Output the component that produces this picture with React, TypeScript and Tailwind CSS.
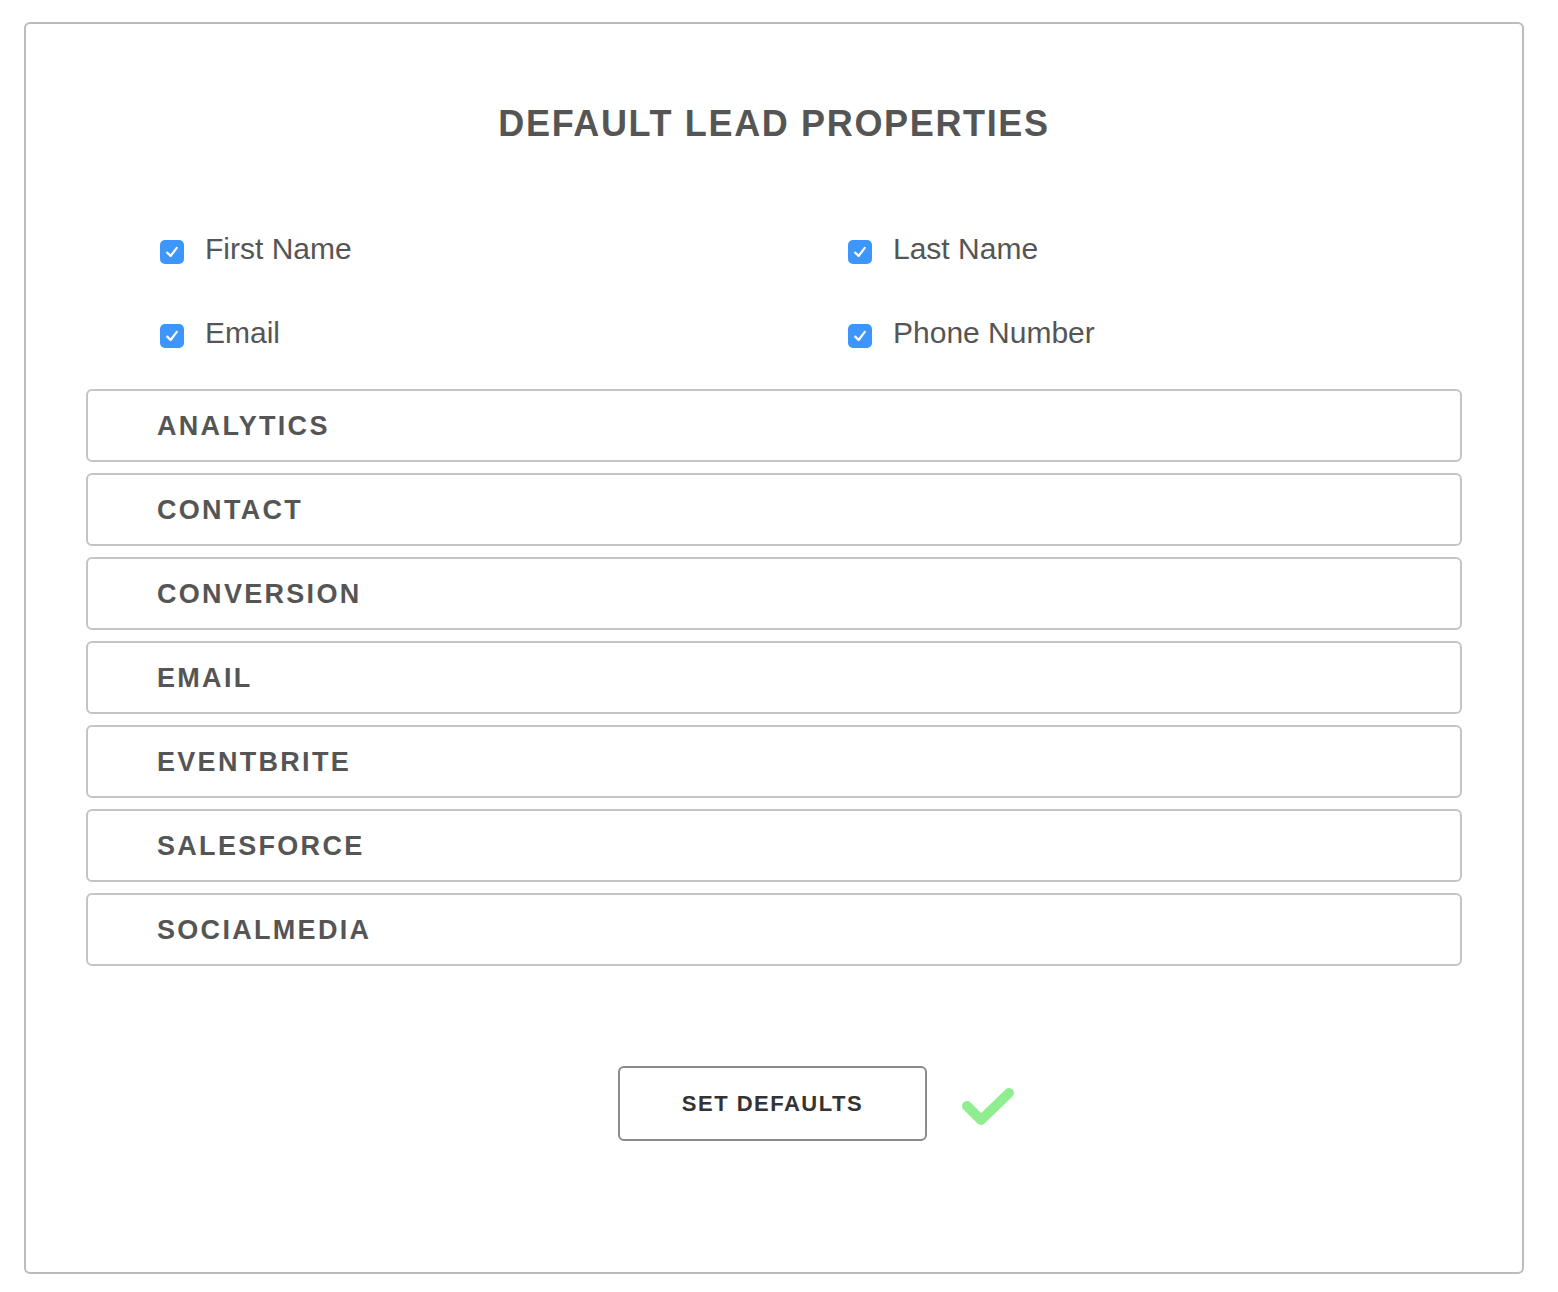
import React from "react";

const fields = [
  { name: "First Name", checked: true },
  { name: "Last Name", checked: true },
  { name: "Email", checked: true },
  { name: "Phone Number", checked: true },
];

const groups = [
  "ANALYTICS",
  "CONTACT",
  "CONVERSION",
  "EMAIL",
  "EVENTBRITE",
  "SALESFORCE",
  "SOCIALMEDIA",
];

function CheckBox({ checked }: { checked: boolean }) {
  return (
    <span
      className={
        checked
          ? "mt-[4px] flex h-[24px] w-[24px] shrink-0 items-center justify-center rounded-[5px] bg-[#3d96fb]"
          : "mt-[4px] flex h-[24px] w-[24px] shrink-0 items-center justify-center rounded-[5px] border border-[#aaa] bg-white"
      }
    >
      {checked && (
        <svg width="16" height="16" viewBox="0 0 16 16" fill="none">
          <path
            d="M3.2 8.6 L6.6 12 L12.8 3.8"
            stroke="white"
            strokeWidth="2.2"
            strokeLinecap="round"
            strokeLinejoin="round"
          />
        </svg>
      )}
    </span>
  );
}

export default function App() {
  return (
    <div className="min-h-[1292px] bg-white pt-[22px] pl-[24px] font-['Liberation_Sans',Arial,sans-serif]">
      <div className="flex h-[1252px] w-[1500px] flex-col rounded-[6px] border-2 border-[#bcbcbc] px-[60px] pt-[78px]">
        <h1 className="text-center text-[36px] leading-[44px] font-bold tracking-[1.65px] text-[#555]">
          DEFAULT LEAD PROPERTIES
        </h1>

        {/* Default fields */}
        <div className="mt-[80px] grid grid-cols-2 gap-y-[36px]">
          {fields.map((f) => (
            <label key={f.name} className="flex h-[48px] items-center pl-[74px]">
              <CheckBox checked={f.checked} />
              <span className="ml-[21px] pb-[3px] text-[30px] leading-none text-[#555]">{f.name}</span>
            </label>
          ))}
        </div>

        {/* Property groups */}
        <div className="mt-[31px] flex flex-col gap-[11px]">
          {groups.map((g) => (
            <div
              key={g}
              className="flex h-[73px] items-center rounded-[6px] border-2 border-[#c4c4c4] pl-[69px]"
            >
              <span className="pt-[1px] text-[27px] leading-none font-bold tracking-[2.3px] text-[#555]">{g}</span>
            </div>
          ))}
        </div>

        <div className="mt-[100px] -ml-[3px] grid grid-cols-[1fr_auto_1fr] items-center">
          <div />
          <button className="h-[75px] w-[309px] rounded-[6px] border-2 border-[#8a8a8a] bg-white text-[22px] font-bold tracking-[1.5px] text-[#333]">
            SET DEFAULTS
          </button>
          <div className="pl-[35px] pt-[12px]">
            <svg width="54" height="44" viewBox="0 0 54 44" fill="none">
              <path
                d="M5 18 L19 32 L47 5"
                stroke="#90ee90"
                strokeWidth="10"
                strokeLinecap="round"
                strokeLinejoin="round"
              />
            </svg>
          </div>
        </div>
      </div>
    </div>
  );
}
